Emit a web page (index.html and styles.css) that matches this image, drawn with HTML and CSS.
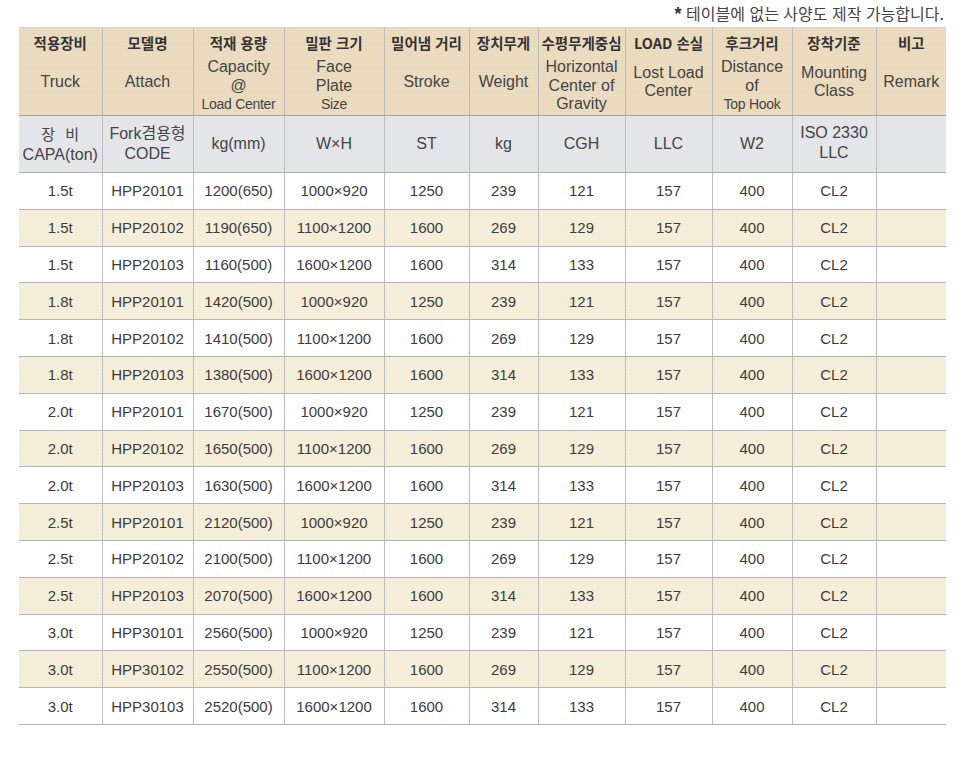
FILE: index.html
```html
<!DOCTYPE html>
<html lang="ko">
<head>
<meta charset="utf-8">
<title>Spec table</title>
<link rel="stylesheet" href="styles.css">
</head>
<body>
<div class="page">
  <p class="note"><span class="star">*</span> 테이블에 없는 사양도 제작 가능합니다.</p>
  <table class="spec">
    <colgroup>
      <col style="width:83px"><col style="width:91px"><col style="width:91px"><col style="width:100px">
      <col style="width:85px"><col style="width:69px"><col style="width:87px"><col style="width:87px">
      <col style="width:80px"><col style="width:84px"><col style="width:70px">
    </colgroup>
    <thead>
      <tr class="head">
        <th><div class="hcell"><div class="ko">적용장비</div><div class="en">Truck</div></div></th>
        <th><div class="hcell"><div class="ko">모델명</div><div class="en">Attach</div></div></th>
        <th><div class="hcell"><div class="ko">적재 용량</div><div class="en">Capacity<br>@<br><span class="sm">Load Center</span></div></div></th>
        <th><div class="hcell"><div class="ko">밀판 크기</div><div class="en">Face<br>Plate<br><span class="sm">Size</span></div></div></th>
        <th><div class="hcell"><div class="ko">밀어냄 거리</div><div class="en">Stroke</div></div></th>
        <th><div class="hcell"><div class="ko">장치무게</div><div class="en">Weight</div></div></th>
        <th><div class="hcell"><div class="ko">수평무게중심</div><div class="en">Horizontal<br>Center of<br>Gravity</div></div></th>
        <th><div class="hcell"><div class="ko">LOAD 손실</div><div class="en">Lost Load<br>Center</div></div></th>
        <th><div class="hcell"><div class="ko">후크거리</div><div class="en">Distance<br>of<br><span class="sm">Top Hook</span></div></div></th>
        <th><div class="hcell"><div class="ko">장착기준</div><div class="en">Mounting<br>Class</div></div></th>
        <th><div class="hcell"><div class="ko">비고</div><div class="en">Remark</div></div></th>
      </tr>
      <tr class="sub">
        <th><span class="spaced">장 비</span><br>CAPA(ton)</th>
        <th>Fork겸용형<br>CODE</th>
        <th>kg(mm)</th>
        <th>W×H</th>
        <th>ST</th>
        <th>kg</th>
        <th>CGH</th>
        <th>LLC</th>
        <th>W2</th>
        <th class="iso">ISO 2330<br>LLC</th>
        <th></th>
      </tr>
    </thead>
    <tbody>
      <tr><td>1.5t</td><td>HPP20101</td><td>1200(650)</td><td>1000×920</td><td>1250</td><td>239</td><td>121</td><td>157</td><td>400</td><td>CL2</td><td></td></tr>
      <tr class="alt"><td>1.5t</td><td>HPP20102</td><td>1190(650)</td><td>1100×1200</td><td>1600</td><td>269</td><td>129</td><td>157</td><td>400</td><td>CL2</td><td></td></tr>
      <tr><td>1.5t</td><td>HPP20103</td><td>1160(500)</td><td>1600×1200</td><td>1600</td><td>314</td><td>133</td><td>157</td><td>400</td><td>CL2</td><td></td></tr>
      <tr class="alt"><td>1.8t</td><td>HPP20101</td><td>1420(500)</td><td>1000×920</td><td>1250</td><td>239</td><td>121</td><td>157</td><td>400</td><td>CL2</td><td></td></tr>
      <tr><td>1.8t</td><td>HPP20102</td><td>1410(500)</td><td>1100×1200</td><td>1600</td><td>269</td><td>129</td><td>157</td><td>400</td><td>CL2</td><td></td></tr>
      <tr class="alt"><td>1.8t</td><td>HPP20103</td><td>1380(500)</td><td>1600×1200</td><td>1600</td><td>314</td><td>133</td><td>157</td><td>400</td><td>CL2</td><td></td></tr>
      <tr><td>2.0t</td><td>HPP20101</td><td>1670(500)</td><td>1000×920</td><td>1250</td><td>239</td><td>121</td><td>157</td><td>400</td><td>CL2</td><td></td></tr>
      <tr class="alt"><td>2.0t</td><td>HPP20102</td><td>1650(500)</td><td>1100×1200</td><td>1600</td><td>269</td><td>129</td><td>157</td><td>400</td><td>CL2</td><td></td></tr>
      <tr><td>2.0t</td><td>HPP20103</td><td>1630(500)</td><td>1600×1200</td><td>1600</td><td>314</td><td>133</td><td>157</td><td>400</td><td>CL2</td><td></td></tr>
      <tr class="alt"><td>2.5t</td><td>HPP20101</td><td>2120(500)</td><td>1000×920</td><td>1250</td><td>239</td><td>121</td><td>157</td><td>400</td><td>CL2</td><td></td></tr>
      <tr><td>2.5t</td><td>HPP20102</td><td>2100(500)</td><td>1100×1200</td><td>1600</td><td>269</td><td>129</td><td>157</td><td>400</td><td>CL2</td><td></td></tr>
      <tr class="alt"><td>2.5t</td><td>HPP20103</td><td>2070(500)</td><td>1600×1200</td><td>1600</td><td>314</td><td>133</td><td>157</td><td>400</td><td>CL2</td><td></td></tr>
      <tr><td>3.0t</td><td>HPP30101</td><td>2560(500)</td><td>1000×920</td><td>1250</td><td>239</td><td>121</td><td>157</td><td>400</td><td>CL2</td><td></td></tr>
      <tr class="alt"><td>3.0t</td><td>HPP30102</td><td>2550(500)</td><td>1100×1200</td><td>1600</td><td>269</td><td>129</td><td>157</td><td>400</td><td>CL2</td><td></td></tr>
      <tr><td>3.0t</td><td>HPP30103</td><td>2520(500)</td><td>1600×1200</td><td>1600</td><td>314</td><td>133</td><td>157</td><td>400</td><td>CL2</td><td></td></tr>
    </tbody>
  </table>
</div>
</body>
</html>
```
FILE: styles.css
```css
html, body {
  margin: 0;
  padding: 0;
  background: #ffffff;
}

.page {
  width: 966px;
  padding: 0 20px 0 19px;
  box-sizing: border-box;
  font-family: "Liberation Sans", Arial, "Noto Sans CJK KR", sans-serif;
  color: #3a3a3a;
}

.note {
  margin: 0;
  height: 27px;
  line-height: 26px;
  text-align: right;
  font-size: 16px;
  color: #444;
  padding-right: 2px;
  font-family: "Noto Sans CJK KR", "Liberation Sans", sans-serif;
  font-weight: 400;
}

.star {
  font-family: "Liberation Sans", sans-serif;
  font-weight: 700;
  font-size: 18px;
  color: #333;
}

.spec {
  width: 927px;
  border-collapse: collapse;
  table-layout: fixed;
}

.spec th,
.spec td {
  padding: 0;
  text-align: center;
  border-left: 1px solid #bdbdbd;
  border-right: 1px solid #bdbdbd;
  border-bottom: 1px solid #b3b3b3;
}

.spec tr > :first-child { border-left: none; }
.spec tr > :last-child { border-right: none; }

.head th {
  height: 87px;
  vertical-align: top;
  font-weight: normal;
  background-color: #e9d9bb;
  background-image: repeating-linear-gradient(180deg, rgba(255,255,255,0.18) 0px, rgba(255,255,255,0.18) 1px, rgba(0,0,0,0) 1px, rgba(0,0,0,0) 3px);
  border-top: 1px solid #ded3bf;
  border-bottom: 1px solid #a9a49a;
}

.hcell {
  height: 87px;
  display: flex;
  flex-direction: column;
  box-sizing: border-box;
  padding-bottom: 9px;
}

.ko {
  height: 30px;
  line-height: 30px;
  font-family: "Noto Sans CJK KR", sans-serif;
  font-weight: 700;
  font-size: 14.5px;
  color: #333;
  white-space: nowrap;
}

.en {
  flex: 1;
  display: flex;
  flex-direction: column;
  align-items: center;
  justify-content: center;
  font-size: 16px;
  line-height: 18.5px;
  color: #444;
}

.sm {
  font-size: 14px;
  letter-spacing: -0.3px;
}

.sub th {
  height: 53px;
  font-weight: normal;
  font-size: 16px;
  line-height: 20px;
  color: #444;
  background: #e4e5e9;
  border-bottom: 1px solid #aeaeae;
}

.sub .iso {
  vertical-align: middle;
  padding-bottom: 3px;
}

.spaced {
  letter-spacing: 3px;
  font-family: "Noto Sans CJK KR", sans-serif;
  font-size: 15px;
  margin-right: -3px;
}

.spec td {
  height: 35.8px;
  font-size: 15px;
  color: #3c3c3c;
  background: #ffffff;
}

.spec tr.alt td {
  background-color: #f4ecd5;
  background-image: repeating-linear-gradient(180deg, rgba(255,255,255,0.25) 0px, rgba(255,255,255,0.25) 1px, rgba(0,0,0,0) 1px, rgba(0,0,0,0) 3px);
}
```
